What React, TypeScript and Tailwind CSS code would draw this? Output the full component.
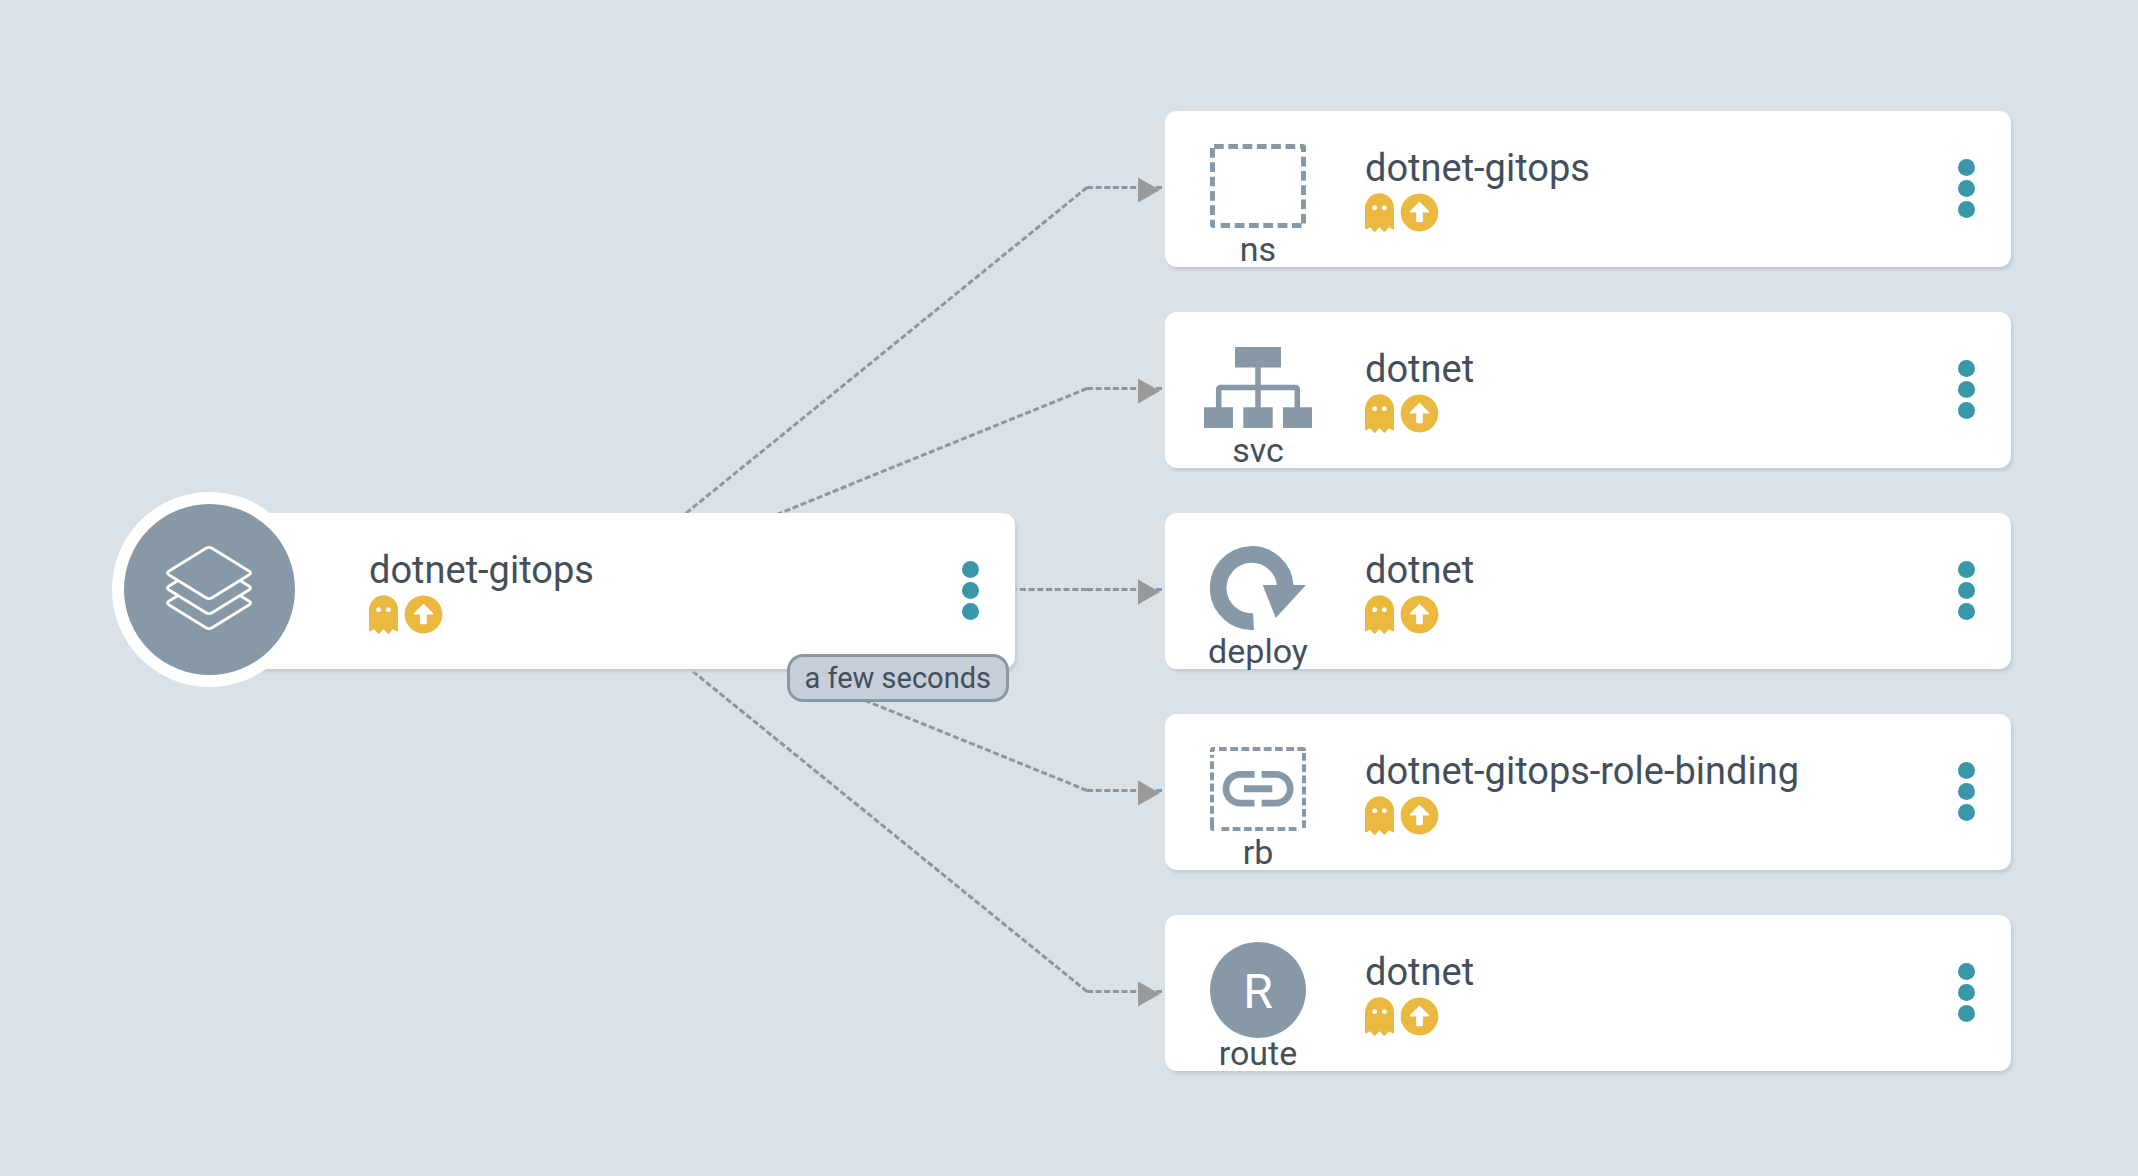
import type { ReactNode } from 'react';
import { FaArrowAltCircleUp, FaGhost } from 'react-icons/fa';

const SLATE = '#8799a7';

type Kind = 'ns' | 'svc' | 'deploy' | 'rb' | 'route';

const RESOURCES: { kind: Kind; name: string }[] = [
  { kind: 'ns', name: 'dotnet-gitops' },
  { kind: 'svc', name: 'dotnet' },
  { kind: 'deploy', name: 'dotnet' },
  { kind: 'rb', name: 'dotnet-gitops-role-binding' },
  { kind: 'route', name: 'dotnet' },
];

function StackIcon() {
  return (
    <svg className="mr-0.5 mb-[3px]" width="86" height="84" viewBox="0 0 86 84" fill={SLATE} stroke="#fff" strokeWidth="2.8" strokeLinejoin="round" aria-hidden="true">
      {[30, 15, 0].map((dy) => (
        <path
          key={dy}
          transform={`translate(0 ${dy})`}
          d="M40 2.300Q43 0.600 46 2.300L82.500 24.800Q86.700 27 82.500 29.200L46 51.700Q43 53.500 40 51.700L3.500 29.200Q-0.700 27 3.500 24.800Z"
        />
      ))}
    </svg>
  );
}

const KIND_ICONS: Record<Kind, ReactNode> = {
  ns: (
    <svg width="96" height="84" viewBox="0 0 96 84" fill="none" stroke={SLATE} strokeWidth="5" aria-hidden="true">
      <path d="M4 2.500H86M93.500 12.700V81" strokeDasharray="9.700 4.600" />
      <path d="M77.400 81.500H10.700M2.500 4V71" strokeDasharray="9.700 4.630" />
      <path d="M90 2.500H92.500Q93.500 2.500 93.500 3.500V8M2.500 75.700V80.500Q2.500 81.500 3.500 81.500H5M82 81.500H91.500" />
    </svg>
  ),
  svc: (
    <svg width="108" height="81" viewBox="0 0 108 81" fill={SLATE} aria-hidden="true">
      <path d="M31 0H77V20.500H31ZM0 60.300H29V81H0ZM39.300 60.300H68.700V81H39.300ZM79 60.300H108V81H79Z" />
      <path d="M54 20V61M14.700 61V42.500Q14.700 40.500 16.700 40.500H91.300Q93.300 40.500 93.300 42.500V61" fill="none" stroke={SLATE} strokeWidth="5.500" />
    </svg>
  ),
  deploy: (
    <svg width="96" height="84" viewBox="0 0 96 84" fill={SLATE} aria-hidden="true">
      <path d="M43.500 75.600A33.600 33.600 0 1 1 75.300 40" fill="none" stroke={SLATE} strokeWidth="16.700" />
      <path d="M52.700 39H96L65.700 72Z" />
    </svg>
  ),
  rb: (
    <svg width="96" height="84" viewBox="0 0 96 84" fill="none" aria-hidden="true">
      <path d="M9 2H90M94 6V82M86.500 82H8M2 78V8" stroke={SLATE} strokeWidth="4" strokeDasharray="7.800 3.400" />
      <path d="M5 2H3Q2 2 2 3V5M90 2H93Q94 2 94 3V4M2 78V81Q2 82 3 82H4" stroke={SLATE} strokeWidth="4" />
      <path
        fill={SLATE}
        transform="translate(5.500 -0.800) scale(3.550)"
        d="M3.900 12c0-1.710 1.390-3.100 3.100-3.100h4V7H7c-2.760 0-5 2.240-5 5s2.240 5 5 5h4v-1.900H7c-1.710 0-3.100-1.390-3.100-3.100zM8 13h8v-2H8v2zm9-6h-4v1.900h4c1.710 0 3.100 1.390 3.100 3.100s-1.390 3.100-3.100 3.100h-4V17h4c2.760 0 5-2.240 5-5s-2.240-5-5-5z"
      />
    </svg>
  ),
  route: (
    <span className="flex size-24 items-center justify-center rounded-full bg-[#8799a7] pt-1 text-5xl text-white">R</span>
  ),
};

function NodeDetails({ name }: { name: string }) {
  return (
    <div className="flex min-w-0 flex-1 flex-col gap-0.5 pt-[34px]">
      <span className="text-[38px] leading-[46px]">{name}</span>
      <span className="flex gap-1.5 text-[#ebb93f]">
        <FaGhost title="Missing" className="h-[39px] w-[29px]" />
        <FaArrowAltCircleUp title="OutOfSync" className="size-[39px]" />
      </span>
    </div>
  );
}

function NodeMenu({ name }: { name: string }) {
  return (
    <button type="button" aria-label={`Actions for ${name}`} className="mr-9 flex w-[17px] flex-col justify-center gap-1 pb-0.5">
      <span className="size-[17px] rounded-full bg-[#3997a9]" />
      <span className="size-[17px] rounded-full bg-[#3997a9]" />
      <span className="size-[17px] rounded-full bg-[#3997a9]" />
    </button>
  );
}

const CARD = 'relative flex h-[156px] w-[846px] shrink-0 rounded-xl bg-white shadow-[2px_3px_3px_#c3cdd6]';

function ApplicationNode() {
  return (
    <article className={CARD}>
      <div className="absolute -top-[21px] -left-[57px] flex size-[195px] items-center justify-center rounded-full border-12 border-white bg-[#8799a7]">
        <StackIcon />
      </div>
      <div className="w-[200px] shrink-0" />
      <NodeDetails name="dotnet-gitops" />
      <NodeMenu name="dotnet-gitops" />
      <span className="absolute right-1.5 -bottom-[33px] rounded-2xl border-3 border-[#8799a7] bg-[#c6ced9] px-[15px] text-[29px] leading-[42px]">
        a few seconds
      </span>
    </article>
  );
}

function ResourceNode({ kind, name }: { kind: Kind; name: string }) {
  return (
    <article className={CARD}>
      <div className="flex w-[186px] shrink-0 flex-col items-center">
        <div className="flex h-[150px] items-center justify-center">{KIND_ICONS[kind]}</div>
        <span className="absolute top-[119px] text-[34px] leading-[38px]">{kind}</span>
      </div>
      <div className="w-3.5 shrink-0" />
      <NodeDetails name={name} />
      <NodeMenu name={name} />
    </article>
  );
}

/** Dashed stroke whose gaps are adjusted so that both ends finish on a full dash. */
function DashedLine({ x1, y1, x2, y2 }: { x1: number; y1: number; x2: number; y2: number }) {
  const length = Math.hypot(x2 - x1, y2 - y1);
  const count = Math.round((length + 2.7) / 8.7);
  const gap = (length - 6 * count) / (count - 1);
  return <line x1={x1} y1={y1} x2={x2} y2={y2} stroke={SLATE} strokeWidth="3" strokeDasharray={`6 ${gap}`} />;
}

function Edges() {
  return (
    <svg className="absolute top-0 left-0" width="1842" height="960" viewBox="0 0 1842 960" aria-hidden="true">
      {RESOURCES.map((resource, i) => {
        const y = 76.5 + i * 201;
        return (
          <g key={resource.kind}>
            <DashedLine x1={423} y1={478.5} x2={918} y2={y} />
            <DashedLine x1={918} y1={y} x2={993} y2={y} />
            <path d={`M969 ${y - 10}L991 ${y + 2.5}L969 ${y + 15}Z`} fill="#999" />
          </g>
        );
      })}
    </svg>
  );
}

export default function App() {
  return (
    <main className="flex min-h-screen items-center justify-center bg-[#dae1e7] pt-1.5 pl-[42px] font-['Roboto',sans-serif] text-[#434f5b]">
      <div className="relative flex items-center gap-[150px]">
        <Edges />
        <ApplicationNode />
        <div className="flex flex-col gap-[45px]">
          {RESOURCES.map((resource) => (
            <ResourceNode key={resource.kind} {...resource} />
          ))}
        </div>
      </div>
    </main>
  );
}
